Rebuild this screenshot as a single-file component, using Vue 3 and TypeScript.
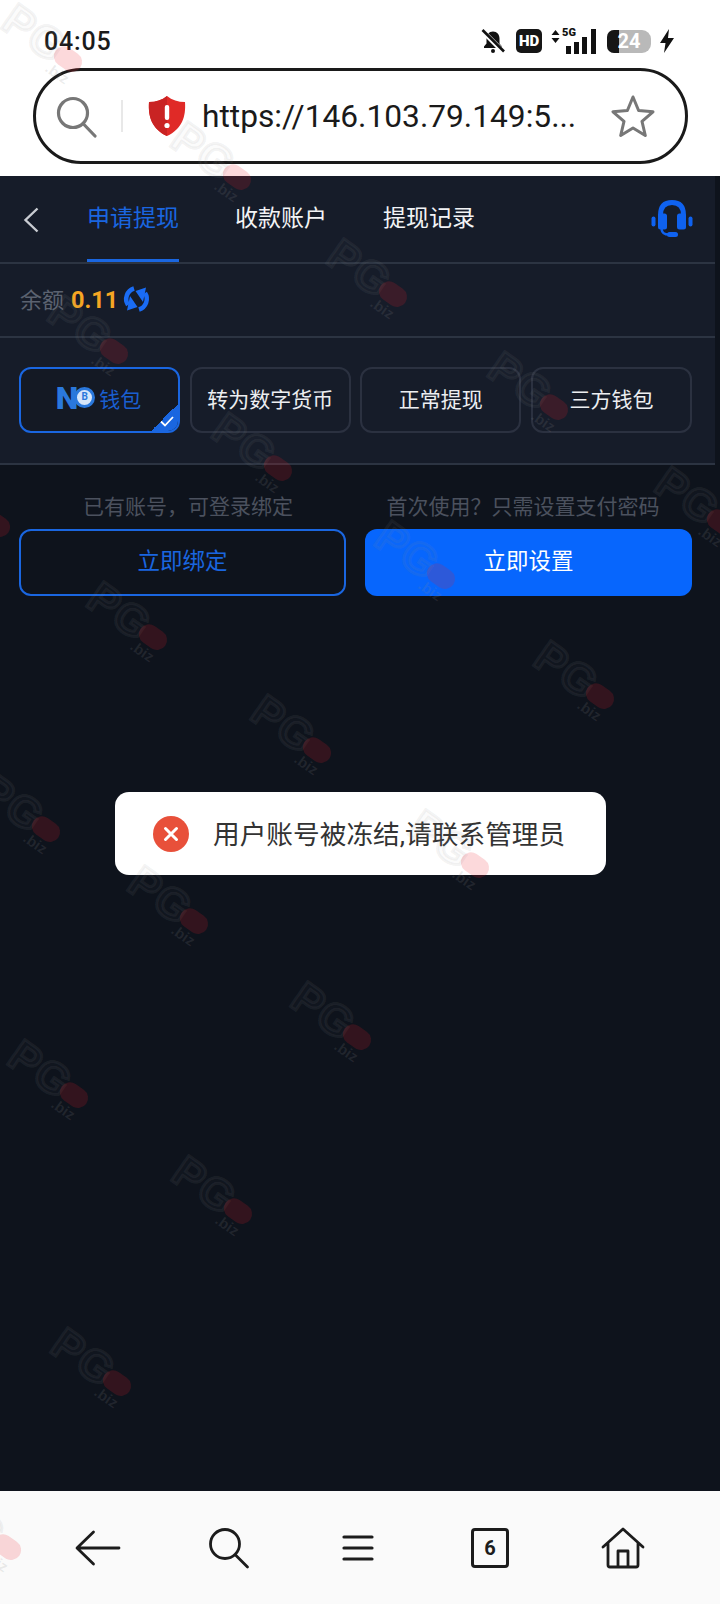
<script setup lang="ts">
interface Mark { x: number; y: number }
const marks: Mark[] = [
  [2, 2], [167, 117], [320, 232], [47, 287], [477, 342], [207, 402], [640, 455], [-68, 457],
  [367, 507], [85, 567], [522, 625], [245, 678], [-20, 755], [125, 845], [400, 790], [285, 958],
  [8, 1015], [168, 1128], [50, 1297], [-58, 1457],
].map(([x, y]) => ({ x, y }))
const tabs = ['申请提现', '收款账户', '提现记录']
const methods = ['转为数字货币', '正常提现', '三方钱包']
function markStyle(m: Mark) {
  return { left: Math.round(m.x * 1.0227 + 20) + 'px', top: Math.round(m.y * 1.0227 - 8) + 'px' }
}
</script>

<template>
  <div class="screen">
    <header class="chrome">
      <div class="status">
        <span class="time">04:05</span>
        <div class="status-icons">
          <svg class="s-bell" width="26" height="26" viewBox="0 0 26 26">
            <path d="M13 3.500c-4 0-6.500 3-6.500 7v5L4 18.500v1.500h18v-1.500L19.500 15.500v-5c0-4-2.500-7-6.500-7z" fill="#111" />
            <circle cx="13" cy="23" r="2" fill="#111" />
            <path d="M2.500 3 L24 24.500" stroke="#fff" stroke-width="5" />
            <path d="M2.500 2 L24 23.500" stroke="#111" stroke-width="2.600" />
          </svg>
          <span class="hd">HD</span>
          <div class="signal">
            <svg class="updown" width="9" height="13" viewBox="0 0 9 13">
              <path d="M4.500 0 L8.500 5 H.5z M4.500 13 L8.500 8 H.5z" fill="#111" />
            </svg>
            <span class="five">5G</span>
            <i class="bar b1"></i><i class="bar b2"></i><i class="bar b3"></i><i class="bar b4"></i>
          </div>
          <div class="battery"><i class="fill"></i><span>24</span></div>
          <svg width="16" height="24" viewBox="0 0 16 24">
            <path d="M10 0 L1 14 H6.500 L5 24 L15 9 H9z" fill="#111" />
          </svg>
        </div>
      </div>
      <div class="urlbar">
        <svg class="u-search" width="42" height="42" viewBox="0 0 42 42" fill="none" stroke="#777" stroke-width="3.200">
          <circle cx="17" cy="17" r="14.500" />
          <path d="M27.500 28 L39 40" stroke-linecap="round" />
        </svg>
        <i class="divider"></i>
        <svg class="shield" width="38" height="42" viewBox="0 0 38 42">
          <path d="M19 1 C24 5 30 7 37 7 C38 22 34 34 19 41 C4 34 0 22 1 7 C8 7 14 5 19 1z" fill="#e02a27" />
          <path d="M19 1 C14 5 8 7 1 7 C0 22 4 34 19 41z" fill="#c92323" />
          <rect x="16.800" y="10" width="4.400" height="15" rx="2" fill="#fff" />
          <circle cx="19" cy="30.500" r="2.600" fill="#fff" />
        </svg>
        <span class="url">https://146.103.79.149:5...</span>
        <svg class="star" width="44" height="44" viewBox="0 0 44 44" fill="none" stroke="#777" stroke-width="3" stroke-linejoin="round">
          <path d="M22 3 L27.600 16.500 L42 17.800 L31 27.400 L34.300 41.500 L22 34 L9.700 41.500 L13 27.400 L2 17.800 L16.400 16.500z" />
        </svg>
      </div>
    </header>

    <main class="page">
      <section class="panel">
        <nav class="tabs">
          <svg class="back" width="16" height="26" viewBox="0 0 16 26" fill="none" stroke="#c9ccd2" stroke-width="2.400">
            <path d="M14.500 1.500 L2.500 13 L14.500 24.500" />
          </svg>
          <a v-for="(t, i) in tabs" :key="t" class="tab" :class="{ active: i === 0 }">{{ t }}</a>
          <svg class="headset" width="42" height="38" viewBox="0 0 42 38">
            <path d="M9.500 18 V15 C9.500 6 14 2.500 21 2.500 C28 2.500 32.500 6 32.500 15 V18" fill="none" stroke="#0f62f0" stroke-width="5" />
            <rect x="7" y="13.500" width="9" height="16" rx="2.500" fill="#0f62f0" />
            <rect x="26" y="13.500" width="9" height="16" rx="2.500" fill="#0f62f0" />
            <rect x="0.500" y="16.500" width="4" height="10" rx="2" fill="#0f62f0" />
            <rect x="37.500" y="16.500" width="4" height="10" rx="2" fill="#0f62f0" />
            <path d="M10.500 29 C11 33 13 34.500 18 34.500" fill="none" stroke="#0f62f0" stroke-width="2.500" />
            <rect x="16" y="32" width="11" height="5" rx="2.500" fill="#0f62f0" />
          </svg>
        </nav>
        <div class="balance">
          <span class="b-label">余额</span>
          <span class="b-value">0.11</span>
          <svg width="29" height="30" viewBox="0 0 29 30" fill="none">
            <path d="M12 4.500 A11 11 0 0 0 6 21" stroke="#1a6cf5" stroke-width="4.500" />
            <path d="M17 25.500 A11 11 0 0 0 23 9" stroke="#1a6cf5" stroke-width="4.500" />
            <path d="M8 12 L15.500 23 L5 26.500z M21 18 L13.500 7 L24 3.500z" fill="#1a6cf5" />
          </svg>
        </div>
        <div class="methods">
          <button class="method selected">
            <span class="no-logo"><b>N</b><i class="coin">B</i></span>
            <span>钱包</span>
            <i class="corner">
              <svg width="14" height="11" viewBox="0 0 14 11" fill="none" stroke="#fff" stroke-width="1.800">
                <path d="M1 5.500 L5 9.500 L13 1" />
              </svg>
            </i>
          </button>
          <button v-for="m in methods" :key="m" class="method">{{ m }}</button>
        </div>
      </section>

      <section class="actions">
        <div class="action first">
          <p>已有账号，可登录绑定</p>
          <button class="btn outline">立即绑定</button>
        </div>
        <div class="action second">
          <p>首次使用？只需设置支付密码</p>
          <button class="btn solid">立即设置</button>
        </div>
      </section>
    </main>

    <footer class="bottom">
      <svg width="46" height="36" viewBox="0 0 46 36" fill="none" stroke="#1c1c1c" stroke-width="2.800" stroke-linecap="round" stroke-linejoin="round">
        <path d="M18.500 2 L2 18 L18.500 34 M2.500 18 H44" />
      </svg>
      <svg class="shifted" width="42" height="42" viewBox="0 0 42 42" fill="none" stroke="#1c1c1c" stroke-width="2.800" stroke-linecap="round">
        <circle cx="17" cy="17" r="14.500" />
        <path d="M27.500 28 L39.500 40" />
      </svg>
      <svg class="shifted" width="32" height="30" viewBox="0 0 32 30" fill="none" stroke="#1c1c1c" stroke-width="3.200" stroke-linecap="round">
        <path d="M2 4 H30 M2 15 H30 M2 26 H30" />
      </svg>
      <span class="tabcount">6</span>
      <svg width="44" height="42" viewBox="0 0 44 42" fill="none" stroke="#1c1c1c" stroke-width="2.800" stroke-linejoin="round" stroke-linecap="round">
        <path d="M2 20 L22 2 L42 20 M7 16 V38 Q7 40 9 40 H35 Q37 40 37 38 V16 M17 40 V24 H27 V40" />
      </svg>
    </footer>

    <div class="toast">
      <svg width="36" height="36" viewBox="0 0 36 36">
        <circle cx="18" cy="18" r="18" fill="#e8503a" />
        <path d="M12.500 12.500 L23.500 23.500 M23.500 12.500 L12.500 23.500" stroke="#fff" stroke-width="3" stroke-linecap="round" />
      </svg>
      <span>用户账号被冻结,请联系管理员</span>
    </div>

    <div class="marks">
      <div v-for="(m, i) in marks" :key="i" class="mark" :style="markStyle(m)">
        <span class="pg">PG</span><i class="blob"></i><span class="biz">.biz</span>
      </div>
    </div>
  </div>
</template>

<style>
html, body { margin: 0; background: #0e131c; }
</style>

<style scoped>
.screen {
  position: relative;
  width: 720px;
  height: 1604px;
  overflow: hidden;
  display: flex;
  flex-direction: column;
  background: #0e131c;
  font-family: Roboto, "Noto Sans CJK SC", sans-serif;
}
.chrome {
  background: #fff;
  height: 176px;
  box-sizing: border-box;
  padding-top: 26px;
  flex: none;
}
.status {
  height: 30px;
  display: flex;
  align-items: center;
  justify-content: space-between;
  padding: 0 45px 0 44px;
}
.time { font-size: 25px; font-weight: 500; color: #1a1a1a; letter-spacing: 0.8px; }
.status-icons { display: flex; align-items: center; }
.s-bell { margin-right: 10px; }
.hd {
  width: 26px; height: 24px; border-radius: 5px; background: #161616; color: #fff;
  font-size: 15px; font-weight: 900; display: flex; align-items: center; justify-content: center;
  margin-right: 9px;
}
.signal { position: relative; width: 46px; height: 26px; margin-right: 10px; }
.updown { position: absolute; left: 0; top: 2px; }
.five { position: absolute; left: 11px; top: -2px; font-size: 11px; font-weight: 900; color: #111; }
.bar { position: absolute; bottom: 0; width: 4.500px; background: #111; }
.b1 { left: 15px; height: 8px; }
.b2 { left: 23px; height: 12px; }
.b3 { left: 31px; height: 17px; }
.b4 { left: 40px; height: 25px; }
.battery {
  position: relative; width: 44px; height: 23px; border-radius: 7px 9px 9px 7px; background: #b9b9b9;
  overflow: hidden; margin-right: 8px; display: flex; align-items: center; justify-content: center;
}
.battery .fill { position: absolute; left: 0; top: 0; bottom: 0; width: 12px; background: #161616; }
.battery span { position: relative; color: #fff; font-size: 20px; font-weight: 700; }
.urlbar {
  margin: 12px 32px 0 33px;
  height: 96px;
  box-sizing: border-box;
  border: 3.500px solid #1a1a1a;
  border-radius: 48px;
  display: flex;
  align-items: center;
  padding-left: 20px;
}
.u-search { flex: none; margin-top: 2px; }
.divider { width: 2px; height: 32px; background: #e8e8e8; margin: 0 25px 0 23px; flex: none; }
.shield { flex: none; }
.url { font-size: 31.700px; color: #1a1a1a; margin-left: 16px; white-space: nowrap; flex: 1; }
.star { flex: none; margin-right: 30px; }

.page { flex: 1; min-height: 0; }
.panel { background: #161c29; margin-right: 5px; }
.tabs {
  position: relative;
  height: 88px;
  box-sizing: border-box;
  border-bottom: 2px solid #2c3442;
  display: flex;
  align-items: stretch;
  padding-left: 87px;
  gap: 56px;
}
.back { position: absolute; left: 23px; top: 31px; }
.headset { position: absolute; right: 22px; top: 24px; }
.tab {
  width: 92px;
  font-size: 23px;
  line-height: 86px;
  color: #f2f3f5;
  white-space: nowrap;
  position: relative;
}
.tab.active { color: #1a66e0; }
.tab.active::after {
  content: "";
  position: absolute;
  left: 0; right: 0; bottom: 0;
  height: 3px;
  background: #1a66e0;
}
.balance {
  height: 74px;
  box-sizing: border-box;
  border-bottom: 2px solid #2c3442;
  display: flex;
  align-items: center;
  padding-left: 20px;
}
.b-label { font-size: 22px; color: #5b6270; margin-bottom: 5px; }
.b-value { font-size: 23.500px; font-weight: 700; color: #f5a623; margin: 0 4px 0 7px; }
.balance svg { margin-bottom: 3px; }
.methods {
  height: 127px;
  box-sizing: border-box;
  border-bottom: 2px solid #2c3442;
  padding: 29px 23px 0 19px;
  display: flex;
  gap: 9.500px;
  align-items: flex-start;
}
.method {
  position: relative;
  flex: 1 1 0;
  height: 66px;
  box-sizing: border-box;
  background: transparent;
  border: 2px solid #2b3140;
  border-radius: 12px;
  color: #eceef1;
  font: 400 21px Roboto, "Noto Sans CJK SC", sans-serif;
  padding: 0 0 5px;
  white-space: nowrap;
  display: flex;
  align-items: center;
  justify-content: center;
  overflow: hidden;
}
.method.selected {
  border-color: #1a66e0;
  color: #1a5fd0;
  background: #141924;
}
.no-logo { display: flex; align-items: center; margin-right: 4px; margin-left: -2px; }
.no-logo b { font-size: 32px; font-weight: 900; color: #2a78dc; line-height: 1; }
.coin {
  width: 21px; height: 21px; border-radius: 50%; background: #d7e6fa; color: #2a78dc;
  border: 3.500px solid #2a78dc; box-sizing: border-box; margin-left: -4px;
  font: 700 10px/14px Roboto, sans-serif; text-align: center;
}
.corner {
  position: absolute;
  right: -2px;
  bottom: -2px;
  width: 31px;
  height: 31px;
  background: linear-gradient(135deg, transparent 50%, #1a66e0 50%);
  display: flex;
  align-items: flex-end;
  justify-content: flex-end;
  padding: 0 6px 6px 0;
  box-sizing: border-box;
}
.actions {
  display: flex;
  gap: 19px;
  padding: 30px 28px 0 19px;
}
.action { flex: 1 1 0; }
.action p {
  margin: 0 0 9px;
  height: 25px;
  line-height: 25px;
  font-size: 21px;
  color: #4b515e;
  text-align: center;
  white-space: nowrap;
}
.first p { padding-left: 11px; }
.second p { padding-right: 11px; }
.btn {
  display: block;
  width: 100%;
  height: 67px;
  box-sizing: border-box;
  border-radius: 12px;
  font: 400 22.500px Roboto, "Noto Sans CJK SC", sans-serif;
  padding: 0 0 7px;
}
.btn.outline { background: transparent; border: 2px solid #1a66e0; color: #1a66e0; }
.btn.solid { background: #0766fd; border: 0; color: #fff; }

.bottom {
  flex: none;
  height: 113px;
  box-sizing: border-box;
  background: #fafafa;
  display: flex;
  align-items: center;
  padding: 0 75px;
  justify-content: space-between;
}
.shifted { margin-left: -5px; margin-right: 5px; }
.tabcount {
  width: 38px; height: 40px; box-sizing: border-box; border: 3px solid #1c1c1c; border-radius: 4px;
  display: flex; align-items: center; justify-content: center;
  font-size: 20px; font-weight: 700; color: #1c1c1c;
}
.toast {
  position: absolute;
  left: 115px;
  top: 792px;
  width: 491px;
  height: 83px;
  border-radius: 14px;
  background: #fff;
  display: flex;
  align-items: center;
  padding-left: 38px;
  box-sizing: border-box;
  gap: 24px;
  font-size: 26.700px;
  color: #333;
  white-space: nowrap;
}
.toast svg { flex: none; }
.toast span { margin-bottom: 2px; }
.marks { position: absolute; inset: 0; pointer-events: none; }
.mark {
  position: absolute;
  width: 110px;
  height: 50px;
  transform: rotate(35deg);
  transform-origin: left top;
}
.pg {
  position: absolute;
  left: 0;
  top: 0;
  font: 700 44px/50px "Liberation Sans", sans-serif;
  color: rgba(138, 138, 138, 0.04);
  -webkit-text-stroke: 3px rgba(138, 138, 138, 0.11);
  letter-spacing: 1px;
}
.blob {
  position: absolute;
  left: 60px;
  top: 17px;
  width: 30px;
  height: 20px;
  border-radius: 10px;
  background: rgba(240, 28, 44, 0.17);
}
.biz {
  position: absolute;
  left: 62px;
  top: 37px;
  font: 700 15px/16px "Liberation Sans", sans-serif;
  color: rgba(138, 138, 138, 0.16);
}
</style>
